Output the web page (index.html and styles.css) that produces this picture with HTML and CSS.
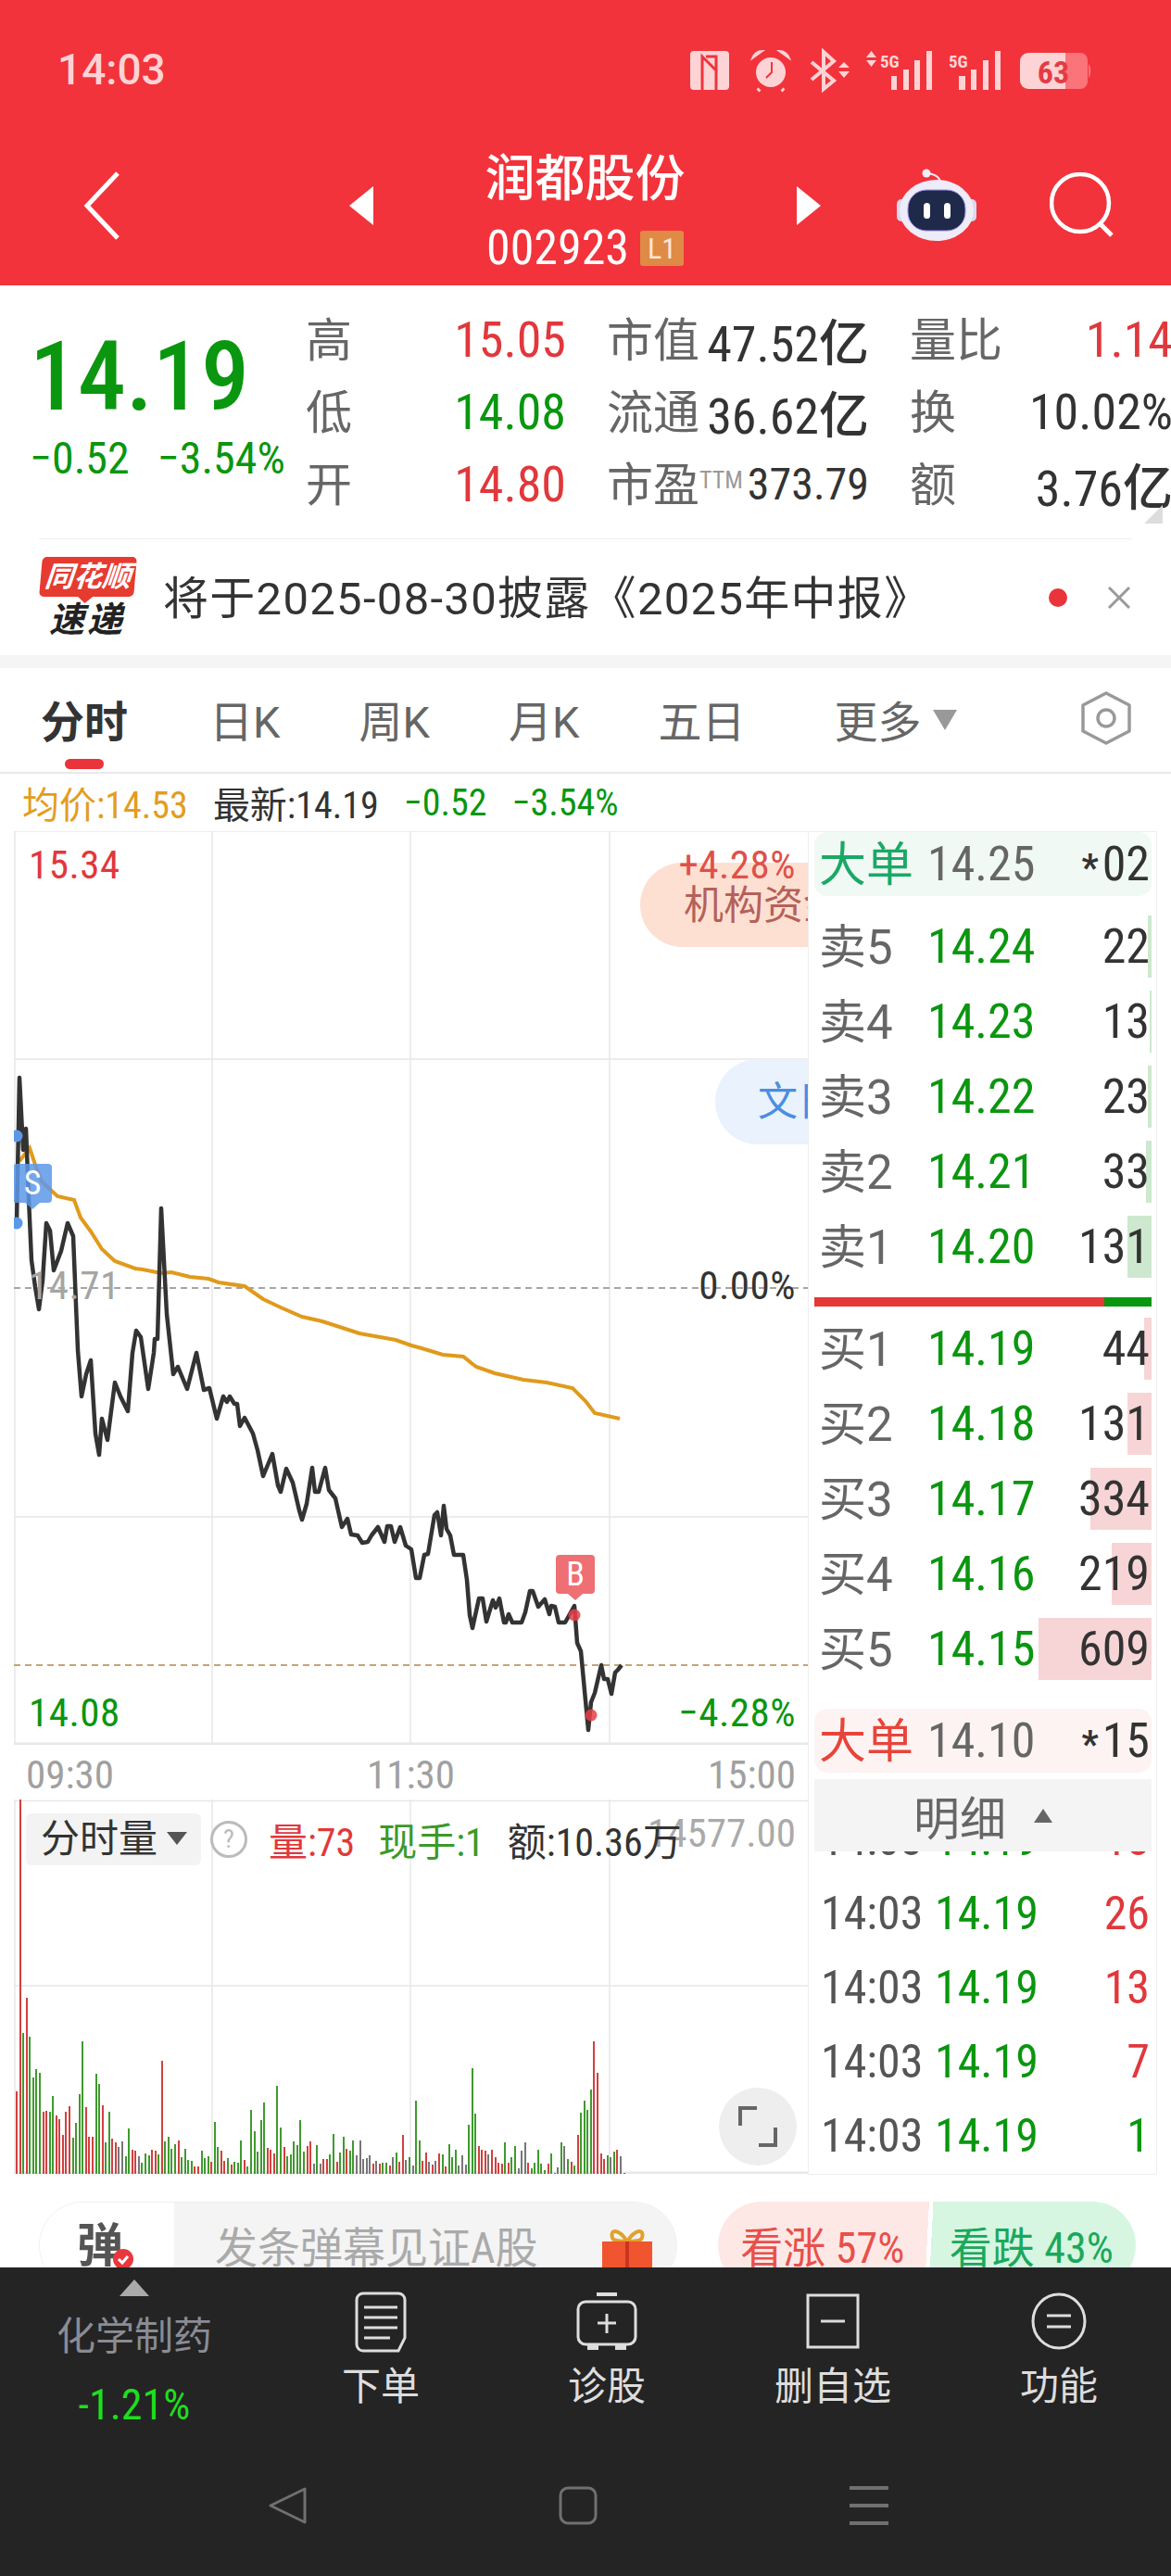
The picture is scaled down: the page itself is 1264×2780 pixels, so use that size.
FILE: index.html
```html
<!DOCTYPE html>
<html lang="zh-CN">
<head>
	<meta charset="utf-8">
	<title>润都股份 002923</title>
	<link rel="stylesheet" href="styles.css">
</head>
<body>
<div class="page">

	<!-- cabecera roja -->
	<header class="top">
		<div class="status">
			<span class="clock">14:03</span>
			<svg class="status-icons" width="460" height="70" viewBox="0 0 460 70">
				<rect x="15" y="15" width="42" height="42" rx="4" fill="#fdd3d5"/>
				<path d="M28 57V21L44 37M32 21H43V57" fill="none" stroke="#f2333b" stroke-width="3"/>
				<circle cx="102" cy="38" r="16" fill="#fdd3d5"/>
				<path d="M82 23C84 18 88 15 93 15ZM122 23C120 18 116 15 111 15Z" fill="#fdd3d5" stroke="#fdd3d5" stroke-width="2"/>
				<path d="M90 56L88 58M114 56L116 58" stroke="#fdd3d5" stroke-width="4"/>
				<path d="M103 27V38L97 44" fill="none" stroke="#f2333b" stroke-width="2"/>
				<path d="M146 27L170 47L159 56V16L170 26L146 46" fill="none" stroke="#fdd3d5" stroke-width="4"/>
				<path d="M175 33H187L181 27ZM175 37H187L181 44ZM205 22H216L210.500 15ZM205 25H216L210.500 32Z" fill="#fdd3d5"/>
				<text class="net" x="220" y="33">5G</text>
				<path d="M232 42h6v15h-6zM245 35h6v22h-6zM257 25h6v32h-6zM270 15h6v42h-6z" fill="#fdd3d5"/>
				<text class="net" x="294" y="33">5G</text>
				<path d="M305 42h7v15h-7zM318 35h6v22h-6zM331 25h6v32h-6zM344 15h6v42h-6z" fill="#fdd3d5"/>
				<path d="M380 17H420V56H380A9 9 0 0 1 371 47V26A9 9 0 0 1 380 17Z" fill="#fdd3d5"/>
				<path d="M420 17H436A8 8 0 0 1 444 25V48A8 8 0 0 1 436 56H420Z" fill="#fb7479"/>
				<path d="M445 29C448 31 448 42 445 44Z" fill="#fb7479"/>
				<text class="battery" x="407" y="50" text-anchor="middle">63</text>
			</svg>
		</div>
		<nav class="nav">
			<svg class="back" width="40" height="76" viewBox="0 0 40 76"><path d="M37 3L4 38L37 73" fill="none" stroke="#fff" stroke-width="5"/></svg>
			<i class="tri-left"></i>
			<div class="title-block">
				<div class="title">润都股份</div>
				<div class="code">002923<span class="badge">L1</span></div>
			</div>
			<i class="tri-right"></i>
			<svg class="robot" width="90" height="82" viewBox="14 10 90 82">
				<path d="M62 27C62 20 56 17 48 16" fill="none" stroke="#f0e8f4" stroke-width="2"/>
				<circle cx="47" cy="16" r="4.500" fill="#f4eef6"/>
				<rect x="15" y="44" width="10" height="24" rx="5" fill="#d9d8ee"/>
				<rect x="91" y="44" width="10" height="24" rx="5" fill="#d9d8ee"/>
				<ellipse cx="58" cy="56" rx="40" ry="33" fill="#eeecf8"/>
				<rect x="27" y="34" width="62" height="44" rx="20" fill="#1f2a4a" stroke="#9b8fe0" stroke-width="1"/>
				<rect x="44" y="48" width="7" height="17" rx="3.500" fill="#fff"/>
				<rect x="66" y="48" width="7" height="17" rx="3.500" fill="#fff"/>
			</svg>
			<svg class="search" width="74" height="72" viewBox="0 0 74 72">
				<circle cx="33" cy="33" r="31" fill="none" stroke="#fff" stroke-width="4.500"/>
				<path d="M55 56L67 68" stroke="#fff" stroke-width="5"/>
			</svg>
		</nav>
	</header>

	<!-- cotizacion -->
	<section class="quote">
		<div class="now">
			<div class="now-price">14.19</div>
			<div class="now-change"><span>−0.52</span><span>−3.54%</span></div>
		</div>
		<div class="stats">
			<div class="stat"><label>高</label><b class="red">15.05</b></div>
			<div class="stat"><label>市值</label><b>47.52亿</b></div>
			<div class="stat"><label>量比</label><b class="red">1.14</b></div>
			<div class="stat"><label>低</label><b class="green">14.08</b></div>
			<div class="stat"><label>流通</label><b>36.62亿</b></div>
			<div class="stat"><label>换</label><b>10.02%</b></div>
			<div class="stat"><label>开</label><b class="red">14.80</b></div>
			<div class="stat"><label>市盈<sup>TTM</sup></label><b class="small">373.79</b></div>
			<div class="stat"><label>额</label><b>3.76亿</b></div>
		</div>
		<i class="corner"></i>
	</section>
	<div class="rule"></div>

	<!-- aviso -->
	<section class="notice">
		<div class="logo">
			<div class="logo-top"><span>同花顺</span></div>
			<div class="logo-bottom">速递</div>
		</div>
		<p class="notice-text">将于2025-08-30披露《2025年中报》</p>
		<i class="dot"></i>
		<svg class="close" width="28" height="28" viewBox="0 0 28 28"><path d="M3 3L25 25M25 3L3 25" stroke="#999" stroke-width="3"/></svg>
	</section>
	<div class="band"></div>

	<!-- pestañas -->
	<div class="tabs">
		<span class="tab active">分时</span>
		<span class="tab first">日K</span>
		<span class="tab">周K</span>
		<span class="tab">月K</span>
		<span class="tab">五日</span>
		<span class="tab more">更多<i class="tri-down"></i></span>
		<svg class="hex" width="56" height="60" viewBox="0 0 56 60">
			<path d="M28 3L53 16V44L28 57L3 44V16Z" fill="none" stroke="#999" stroke-width="3.500" stroke-linejoin="round"/>
			<circle cx="28" cy="30" r="9" fill="none" stroke="#999" stroke-width="3.500"/>
		</svg>
	</div>

	<div class="info">
		<span class="gold">均价:14.53</span>
		<span class="dark">最新:14.19</span>
		<span class="green">−0.52</span>
		<span class="green">−3.54%</span>
	</div>

	<div class="main">
		<div class="charts">
			<div class="price-chart">
				<svg class="plot" width="857" height="986" viewBox="15 897 857 986">
					<path d="M16 897V1883M229 897V1883M443 897V1883M658 897V1883M15 897H872M15 1143H872M15 1637H872" fill="none" stroke="#e8e8e8" stroke-width="1.500"/>
					<path d="M15 1882H872" stroke="#e8e8e8" stroke-width="3"/>
					<path d="M15 1390H872" stroke="#a5a5a5" stroke-width="2" stroke-dasharray="7 5"/>
					<path d="M15 1797H872" stroke="#c4a574" stroke-width="2" stroke-dasharray="7 5"/>
					<polyline class="avg" points="21,1253 25,1248 32,1239 38,1257 45,1275 62,1291 80,1295 87,1314 98,1329 110,1348 124,1361 146,1369 154,1370 174,1374 185,1373 205,1378 225,1380 236,1384 264,1388 284,1402 303,1411 326,1421 348,1426 388,1439 427,1446 444,1452 455,1455 478,1462 500,1464 514,1475 534,1482 565,1489 590,1492 618,1498 632,1512 642,1525 669,1531"/>
					<polyline class="line" points="18,1320 21,1163 25,1241 28,1218 31,1293 34,1360 38,1389 42,1413 46,1382 50,1320 54,1328 58,1371 66,1350 73,1320 79,1334 84,1457 88,1507 93,1483 98,1468 103,1547 107,1570 110,1531 116,1554 124,1492 130,1507 138,1523 143,1460 147,1436 152,1443 160,1499 166,1460 167,1445 170,1445 174,1304 180,1418 187,1483 192,1475 202,1499 212,1460 220,1500 226,1498 234,1531 241,1507 245,1513 248,1507 253,1515 256,1515 259,1539 264,1530 273,1547 278,1565 284,1593 294,1569 300,1603 303,1610 309,1585 316,1600 323,1630 326,1640 331,1623 337,1584 340,1610 344,1610 351,1584 355,1608 362,1617 369,1648 375,1639 379,1656 386,1657 391,1665 397,1664 401,1657 408,1648 415,1664 418,1647 422,1647 426,1664 432,1648 438,1668 444,1672 449,1703 453,1703 458,1678 462,1677 469,1635 472,1632 476,1657 479,1625 482,1650 486,1657 490,1678 500,1678 504,1705 507,1743 510,1757 517,1725 521,1725 525,1750 532,1727 535,1735 539,1725 544,1751 546,1751 549,1742 553,1751 563,1751 567,1740 572,1717 575,1717 581,1734 588,1726 593,1742 595,1733 599,1734 603,1751 610,1751 620,1733 623,1773 627,1782 635,1867 638,1837 642,1827 649,1797 652,1812 656,1812 660,1828 664,1805 667,1802 671,1797"/>
					<circle cx="18" cy="1226" r="6.500" fill="#5b98e8"/>
					<circle cx="18" cy="1320" r="6.500" fill="#5b98e8"/>
					<circle cx="620" cy="1743" r="6.500" fill="#e63e4a" fill-opacity="0.85"/>
					<circle cx="638" cy="1851" r="6.500" fill="#e63e4a" fill-opacity="0.85"/>
				</svg>
				<div class="pill pill-org">机构资金</div>
				<div class="pill pill-news">文日</div>
				<span class="tag tag-s">S</span>
				<span class="tag tag-b">B</span>
				<span class="lbl l-high red">15.34</span>
				<span class="lbl r-high redsoft">+4.28%</span>
				<span class="lbl l-mid grey">14.71</span>
				<span class="lbl r-mid dark">0.00%</span>
				<span class="lbl l-low green">14.08</span>
				<span class="lbl r-low green">−4.28%</span>
			</div>
			<div class="axis"><span>09:30</span><span>11:30</span><span>15:00</span></div>
			<div class="vol-chart">
				<svg class="plot" width="857" height="404" viewBox="0 0 857 404">
					<path d="M1 0V404M214 0V404M428 0V404M643 0V404M0 1.500H857M0 201H857" fill="none" stroke="#e8e8e8" stroke-width="1.500"/>
					<path d="M0 403H857" stroke="#e8e8e8" stroke-width="3"/>
				</svg>
				<div class="vol-bars">
					<i class="r" style="height:89px"></i><i class="r" style="height:404px"></i><i class="g" style="height:152px"></i><i class="r" style="height:190px"></i><i class="g" style="height:148px"></i><i class="g" style="height:104px"></i><i class="g" style="height:113px"></i><i class="g" style="height:109px"></i><i class="r" style="height:67px"></i><i class="r" style="height:68px"></i>
					<i class="g" style="height:67px"></i><i class="g" style="height:84px"></i><i class="r" style="height:63px"></i><i class="r" style="height:59px"></i><i class="r" style="height:42px"></i><i class="r" style="height:67px"></i><i class="r" style="height:73px"></i><i class="g" style="height:39px"></i><i class="g" style="height:55px"></i><i class="g" style="height:86px"></i>
					<i class="g" style="height:143px"></i><i class="r" style="height:72px"></i><i class="r" style="height:40px"></i><i class="r" style="height:40px"></i><i class="g" style="height:108px"></i><i class="g" style="height:97px"></i><i class="r" style="height:74px"></i><i class="g" style="height:34px"></i><i class="g" style="height:67px"></i><i class="r" style="height:38px"></i>
					<i class="r" style="height:34px"></i><i class="n" style="height:29px"></i><i class="n" style="height:35px"></i><i class="g" style="height:19px"></i><i class="g" style="height:49px"></i><i class="r" style="height:26px"></i><i class="r" style="height:25px"></i><i class="n" style="height:19px"></i><i class="g" style="height:12px"></i><i class="g" style="height:22px"></i>
					<i class="g" style="height:20px"></i><i class="r" style="height:26px"></i><i class="r" style="height:25px"></i><i class="g" style="height:21px"></i><i class="r" style="height:122px"></i><i class="g" style="height:35px"></i><i class="g" style="height:40px"></i><i class="g" style="height:27px"></i><i class="g" style="height:32px"></i><i class="r" style="height:36px"></i>
					<i class="g" style="height:18px"></i><i class="g" style="height:27px"></i><i class="g" style="height:15px"></i><i class="g" style="height:14px"></i><i class="r" style="height:8px"></i><i class="r" style="height:8px"></i><i class="g" style="height:25px"></i><i class="g" style="height:17px"></i><i class="g" style="height:19px"></i><i class="r" style="height:13px"></i>
					<i class="g" style="height:56px"></i><i class="g" style="height:29px"></i><i class="r" style="height:25px"></i><i class="r" style="height:14px"></i><i class="g" style="height:17px"></i><i class="r" style="height:10px"></i><i class="g" style="height:13px"></i><i class="g" style="height:12px"></i><i class="g" style="height:36px"></i><i class="r" style="height:15px"></i>
					<i class="g" style="height:8px"></i><i class="g" style="height:69px"></i><i class="g" style="height:46px"></i><i class="g" style="height:24px"></i><i class="g" style="height:58px"></i><i class="g" style="height:77px"></i><i class="r" style="height:28px"></i><i class="r" style="height:26px"></i><i class="r" style="height:22px"></i><i class="g" style="height:95px"></i>
					<i class="g" style="height:50px"></i><i class="r" style="height:29px"></i><i class="g" style="height:19px"></i><i class="g" style="height:21px"></i><i class="g" style="height:35px"></i><i class="g" style="height:31px"></i><i class="g" style="height:58px"></i><i class="g" style="height:24px"></i><i class="r" style="height:30px"></i><i class="r" style="height:35px"></i>
					<i class="n" style="height:11px"></i><i class="g" style="height:31px"></i><i class="n" style="height:11px"></i><i class="r" style="height:16px"></i><i class="r" style="height:16px"></i><i class="g" style="height:21px"></i><i class="g" style="height:43px"></i><i class="r" style="height:13px"></i><i class="g" style="height:23px"></i><i class="g" style="height:40px"></i>
					<i class="r" style="height:27px"></i><i class="g" style="height:25px"></i><i class="g" style="height:36px"></i><i class="n" style="height:20px"></i><i class="n" style="height:36px"></i><i class="n" style="height:16px"></i><i class="n" style="height:17px"></i><i class="n" style="height:20px"></i><i class="r" style="height:11px"></i><i class="n" style="height:14px"></i>
					<i class="r" style="height:11px"></i><i class="g" style="height:12px"></i><i class="g" style="height:12px"></i><i class="r" style="height:9px"></i><i class="n" style="height:18px"></i><i class="g" style="height:23px"></i><i class="r" style="height:13px"></i><i class="r" style="height:42px"></i><i class="n" style="height:15px"></i><i class="g" style="height:18px"></i>
					<i class="n" style="height:9px"></i><i class="g" style="height:79px"></i><i class="g" style="height:36px"></i><i class="r" style="height:14px"></i><i class="r" style="height:23px"></i><i class="n" style="height:13px"></i><i class="r" style="height:10px"></i><i class="n" style="height:14px"></i><i class="r" style="height:22px"></i><i class="g" style="height:21px"></i>
					<i class="r" style="height:8px"></i><i class="g" style="height:32px"></i><i class="g" style="height:18px"></i><i class="g" style="height:26px"></i><i class="n" style="height:9px"></i><i class="n" style="height:20px"></i><i class="n" style="height:10px"></i><i class="g" style="height:53px"></i><i class="g" style="height:114px"></i><i class="g" style="height:65px"></i>
					<i class="r" style="height:30px"></i><i class="r" style="height:26px"></i><i class="r" style="height:25px"></i><i class="n" style="height:21px"></i><i class="r" style="height:26px"></i><i class="r" style="height:18px"></i><i class="r" style="height:12px"></i><i class="r" style="height:11px"></i><i class="g" style="height:34px"></i><i class="r" style="height:12px"></i>
					<i class="g" style="height:18px"></i><i class="g" style="height:30px"></i><i class="n" style="height:6px"></i><i class="n" style="height:25px"></i><i class="n" style="height:34px"></i><i class="r" style="height:12px"></i><i class="g" style="height:6px"></i><i class="g" style="height:12px"></i><i class="g" style="height:26px"></i><i class="g" style="height:11px"></i>
					<i class="g" style="height:4px"></i><i class="r" style="height:11px"></i><i class="g" style="height:22px"></i><i class="g" style="height:1px"></i><i class="n" style="height:7px"></i><i class="g" style="height:34px"></i><i class="n" style="height:30px"></i><i class="g" style="height:16px"></i><i class="r" style="height:13px"></i><i class="g" style="height:9px"></i>
					<i class="r" style="height:42px"></i><i class="g" style="height:66px"></i><i class="g" style="height:79px"></i><i class="g" style="height:69px"></i><i class="g" style="height:91px"></i><i class="r" style="height:143px"></i><i class="r" style="height:109px"></i><i class="r" style="height:22px"></i><i class="r" style="height:16px"></i><i class="g" style="height:20px"></i>
					<i class="n" style="height:18px"></i><i class="g" style="height:24px"></i><i class="r" style="height:26px"></i><i class="n" style="height:19px"></i><i class="r" style="height:1px"></i>
				</div>
				<div class="vol-head">
					<span class="vol-select">分时量<i class="tri-down dark-tri"></i></span>
					<svg class="help" width="42" height="42" viewBox="0 0 42 42">
						<circle cx="21" cy="21" r="18.500" fill="none" stroke="#bbb" stroke-width="3"/>
						<text class="help-mark" x="21" y="30" text-anchor="middle">?</text>
					</svg>
					<span class="red">量:73</span>
					<span class="green-soft">现手:1</span>
					<span class="dark">额:10.36万</span>
				</div>
				<span class="vol-max">14577.00</span>
				<button class="expand">
					<svg width="42" height="44" viewBox="0 0 42 44"><path d="M2 21V2H20M40 23V42H22" fill="none" stroke="#666" stroke-width="4"/></svg>
				</button>
			</div>
		</div>

		<!-- libro de ordenes -->
		<aside class="book">
			<div class="big-order big-sell"><span class="big-name">大单</span><span class="big-price">14.25</span><span class="big-qty"><em>*</em>02</span></div>
			<div class="levels sell">
				<div class="level"><i class="level-bar" style="width:4px"></i><span>卖5</span><b>14.24</b><u>22</u></div>
				<div class="level"><i class="level-bar" style="width:2px"></i><span>卖4</span><b>14.23</b><u>13</u></div>
				<div class="level"><i class="level-bar" style="width:4px"></i><span>卖3</span><b>14.22</b><u>23</u></div>
				<div class="level"><i class="level-bar" style="width:6px"></i><span>卖2</span><b>14.21</b><u>33</u></div>
				<div class="level"><i class="level-bar" style="width:26px"></i><span>卖1</span><b>14.20</b><u>131</u></div>
			</div>
			<div class="ratio"></div>
			<div class="levels buy">
				<div class="level"><i class="level-bar" style="width:8px"></i><span>买1</span><b>14.19</b><u>44</u></div>
				<div class="level"><i class="level-bar" style="width:26px"></i><span>买2</span><b>14.18</b><u>131</u></div>
				<div class="level"><i class="level-bar" style="width:66px"></i><span>买3</span><b>14.17</b><u>334</u></div>
				<div class="level"><i class="level-bar" style="width:43px"></i><span>买4</span><b>14.16</b><u>219</u></div>
				<div class="level"><i class="level-bar" style="width:122px"></i><span>买5</span><b>14.15</b><u>609</u></div>
			</div>
			<div class="big-order big-buy"><span class="big-name">大单</span><span class="big-price">14.10</span><span class="big-qty"><em>*</em>15</span></div>
			<div class="detail-head">明细<i class="tri-up"></i></div>
			<div class="trades">
				<div class="trade partial"><span>14:03</span><b>14.19</b><u class="red">18</u></div>
				<div class="trade"><span>14:03</span><b>14.19</b><u class="red">26</u></div>
				<div class="trade"><span>14:03</span><b>14.19</b><u class="red">13</u></div>
				<div class="trade"><span>14:03</span><b>14.19</b><u class="red">7</u></div>
				<div class="trade"><span>14:03</span><b>14.19</b><u class="green">1</u></div>
			</div>
		</aside>
	</div>

	<!-- barra de comentarios -->
	<div class="danmu">
		<div class="chat">
			<div class="chat-tag">弹<svg class="chat-check" width="24" height="24" viewBox="0 0 24 24"><circle cx="12" cy="12" r="11" fill="#e8383d"/><path d="M7 12L11 16L17 9" fill="none" stroke="#fff" stroke-width="3"/></svg></div>
			<div class="chat-input">发条弹幕见证A股
				<svg class="gift" width="58" height="44" viewBox="0 0 58 44">
					<path d="M29 14C20 0 10 0 13 10C14 14 22 14 29 14C36 14 44 14 45 10C48 0 38 0 29 14Z" fill="none" stroke="#e3a02c" stroke-width="4"/>
					<rect x="2" y="14" width="54" height="30" fill="#f0552f"/>
					<path d="M29 14V44" stroke="#c9351f" stroke-width="4"/>
				</svg>
			</div>
		</div>
		<div class="vote">
			<span class="vote-up">看涨 57%</span>
			<span class="vote-down">看跌 43%</span>
		</div>
	</div>

	<!-- barra inferior -->
	<footer class="dock">
		<div class="dock-row">
			<div class="sector">
				<i class="sector-tri"></i>
				<span class="sector-name">化学制药</span>
				<span class="sector-pct">-1.21%</span>
			</div>
			<div class="dock-item">
				<svg width="56" height="66" viewBox="0 0 56 66">
					<path d="M9 2H47A7 7 0 0 1 54 9V50L47 64H9A7 7 0 0 1 2 57V9A7 7 0 0 1 9 2Z" fill="none" stroke="#ddd" stroke-width="3"/>
					<path d="M10 17H46M10 28H46M10 39H46M10 50H38" stroke="#ddd" stroke-width="3"/>
				</svg>
				<span>下单</span>
			</div>
			<div class="dock-item">
				<svg width="66" height="66" viewBox="0 0 66 66">
					<path d="M22 3H44" stroke="#ddd" stroke-width="4"/>
					<rect x="2" y="11" width="62" height="46" rx="8" fill="none" stroke="#ddd" stroke-width="3"/>
					<path d="M33 24V45M23 34H43" stroke="#ddd" stroke-width="3"/>
					<path d="M12 57H24V63H12ZM42 57H54V63H42Z" fill="#ddd"/>
				</svg>
				<span>诊股</span>
			</div>
			<div class="dock-item">
				<svg width="58" height="66" viewBox="0 0 58 66">
					<rect x="2" y="4" width="54" height="56" fill="none" stroke="#ddd" stroke-width="3"/>
					<path d="M16 32H42" stroke="#ddd" stroke-width="3"/>
				</svg>
				<span>删自选</span>
			</div>
			<div class="dock-item">
				<svg width="60" height="66" viewBox="0 0 60 66">
					<ellipse cx="30" cy="32" rx="28" ry="29" fill="none" stroke="#ddd" stroke-width="3"/>
					<path d="M17 26H43M17 38H43" stroke="#ddd" stroke-width="3"/>
				</svg>
				<span>功能</span>
			</div>
		</div>
		<div class="sys">
			<svg width="42" height="42" viewBox="0 0 42 42"><path d="M40 3V39L3 21Z" fill="none" stroke="#707070" stroke-width="3" stroke-linejoin="round"/></svg>
			<svg width="42" height="42" viewBox="0 0 42 42"><rect x="2" y="2" width="38" height="38" rx="8" fill="none" stroke="#707070" stroke-width="3"/></svg>
			<svg width="42" height="42" viewBox="0 0 42 42"><path d="M0 2H42M0 21H42M0 40H42" stroke="#707070" stroke-width="4"/></svg>
		</div>
	</footer>
</div>
</body>
</html>
```

FILE: styles.css
```css
* {
	margin: 0;
	padding: 0;
	box-sizing: border-box;
}

body {
	width: 1264px;
	height: 2780px;
	background: #fff;
	font-family: Roboto, "Noto Sans CJK SC", sans-serif;
	font-stretch: 81%;
	color: #333;
}

i, em, u {
	font-style: normal;
	text-decoration: none;
}

.page {
	width: 1264px;
	height: 2780px;
	overflow: hidden;
	display: flex;
	flex-direction: column;
}

.red { color: #e0383c; }
.redsoft { color: #e0504a; }
.green { color: #0a960f; }
.green-soft { color: #3a9a2a; }
.gold { color: #e39d1e; }
.dark { color: #333; }
.grey { color: #a5a5a5; }

/* cabecera */
.top {
	height: 308px;
	background: #f2333b;
	color: #fff;
}

.status {
	height: 150px;
	padding: 0 74px 0 62px;
	display: flex;
	align-items: center;
	justify-content: space-between;
}

.clock {
	font-size: 46px;
	font-weight: 500;
	font-stretch: 100%;
	color: #fdd3d5;
}

.net {
	font-size: 19px;
	font-weight: 700;
	fill: #fdd3d5;
}

.battery {
	font-size: 34px;
	font-weight: 700;
	fill: #e53b44;
}

.nav {
	height: 158px;
	padding: 0 0 14px 90px;
	display: flex;
	align-items: center;
}

.tri-left, .tri-right {
	border-top: 21px solid transparent;
	border-bottom: 21px solid transparent;
}

.tri-left {
	margin-left: 247px;
	border-right: 26px solid #fff;
}

.tri-right {
	border-left: 26px solid #fff;
}

.title-block {
	width: 457px;
	margin-top: 9px;
	text-align: center;
}

.title {
	font-size: 54px;
	font-weight: 500;
	line-height: 62px;
}

.code {
	margin-top: 20px;
	height: 46px;
	font-size: 52px;
	line-height: 46px;
	display: flex;
	align-items: center;
	justify-content: center;
}

.badge {
	width: 47px;
	height: 38px;
	margin-left: 12px;
	background: #e08b45;
	border-radius: 3px;
	color: #fde7d5;
	font-size: 32px;
	line-height: 38px;
}

.robot { margin-left: 81px; }
.search { margin-left: 76px; }

/* cotizacion */
.quote {
	position: relative;
	height: 273px;
	display: flex;
}

.now {
	flex: none;
	width: 330px;
	padding: 52px 0 0 32px;
}

.now-price {
	font-size: 104px;
	font-weight: 500;
	font-stretch: 75%;
	line-height: 94px;
	color: #0a960f;
}

.now-change {
	margin-top: 16px;
	display: flex;
	gap: 30px;
	font-size: 48px;
	line-height: 50px;
	color: #0a960f;
}

.stats {
	flex: none;
	padding-top: 19px;
	display: grid;
	grid-template-columns: 281px 283px 284px;
	grid-auto-rows: 78px;
	column-gap: 44px;
}

.stat {
	display: flex;
	align-items: center;
	justify-content: space-between;
	white-space: nowrap;
}

.stat label {
	font-size: 50px;
	color: #666;
	margin-top: -6px;
}

.stat sup {
	font-size: 26px;
	color: #999;
	vertical-align: 14px;
	line-height: 0;
}

.stat b {
	font-size: 54px;
	font-weight: 450;
}

.stat b.small { font-size: 48px; }

.corner {
	position: absolute;
	right: 9px;
	bottom: 16px;
	border-left: 20px solid transparent;
	border-bottom: 20px solid #ddd;
}

.rule {
	height: 1px;
	margin: 0 42px;
	background: #eee;
}

/* aviso */
.notice {
	height: 125px;
	padding: 0 42px 0 44px;
	display: flex;
	align-items: center;
}

.logo { width: 102px; }

.logo-top {
	position: relative;
	height: 43px;
	background: #e63b30;
	border-radius: 5px;
	transform: skewX(-5deg);
	color: #fff;
	font-size: 31px;
	font-weight: 700;
	font-style: italic;
	line-height: 43px;
	text-align: center;
}

.logo-top::after {
	content: "";
	position: absolute;
	left: 42px;
	top: 43px;
	border-left: 8px solid transparent;
	border-right: 8px solid transparent;
	border-top: 7px solid #e63b30;
}

.logo-bottom {
	margin-top: 5px;
	padding-left: 9px;
	font-size: 38px;
	font-weight: 700;
	font-style: italic;
	line-height: 40px;
	color: #222;
	letter-spacing: 3px;
}

.notice-text {
	margin: -6px 0 0 30px;
	font-size: 49px;
	font-stretch: 100%;
	letter-spacing: 1.300px;
	color: #333;
}

.dot {
	margin-left: auto;
	width: 20px;
	height: 20px;
	border-radius: 50%;
	background: #e8343a;
}

.close { margin-left: 42px; }

.band {
	height: 14px;
	background: #f5f5f5;
}

/* pestañas */
.tabs {
	height: 114px;
	padding: 0 42px 4px 44px;
	border-bottom: 2px solid #e8e8e8;
	display: flex;
	align-items: center;
	gap: 85px;
}

.tab {
	position: relative;
	font-size: 47px;
	font-stretch: 100%;
	color: #666;
	white-space: nowrap;
}

.tab.active {
	font-weight: 700;
	color: #333;
}

.tab.active::after {
	content: "";
	position: absolute;
	left: 26px;
	bottom: -20px;
	width: 42px;
	height: 11px;
	border-radius: 6px;
	background: #e8343a;
}

.tab.first { margin-left: 3px; }
.tab.more { margin-left: 11px; }

.tri-down {
	display: inline-block;
	margin-left: 12px;
	vertical-align: 8px;
	border-left: 13px solid transparent;
	border-right: 13px solid transparent;
	border-top: 22px solid #999;
}

.hex { margin-left: auto; }

.info {
	height: 62px;
	padding: 0 0 0 24px;
	display: flex;
	align-items: center;
	gap: 27px;
	font-size: 40px;
}

/* graficos */
.main {
	height: 1479px;
	display: flex;
}

.charts {
	width: 857px;
	margin-left: 15px;
}

.price-chart {
	position: relative;
	height: 986px;
	overflow: hidden;
}

.plot {
	display: block;
	position: absolute;
	left: 0;
	top: 0;
}

.avg {
	fill: none;
	stroke: #e09a1c;
	stroke-width: 4;
}

.line {
	fill: none;
	stroke: #333;
	stroke-width: 4.500;
	stroke-linejoin: round;
}

.pill {
	position: absolute;
	border-radius: 46px 0 0 46px;
	font-size: 43px;
	line-height: 92px;
	white-space: nowrap;
}

.pill-org {
	left: 676px;
	top: 34px;
	width: 240px;
	height: 91px;
	padding-left: 47px;
	background: #fde0d2;
	color: #b5605a;
}

.pill-news {
	left: 757px;
	top: 246px;
	width: 160px;
	height: 92px;
	padding-left: 46px;
	background: #e9f2fd;
	color: #4a8ee0;
}

.tag {
	position: absolute;
	width: 42px;
	color: #fff;
	font-size: 36px;
	line-height: 42px;
	text-align: center;
	border-radius: 4px;
}

.tag::after {
	content: "";
	position: absolute;
	left: 13px;
	top: 100%;
	border-left: 8px solid transparent;
	border-right: 8px solid transparent;
}

.tag-s {
	left: -1px;
	top: 359px;
	background: rgba(92, 152, 232, 0.85);
}

.tag-s::after { border-top: 7px solid rgba(92, 152, 232, 0.85); }

.tag-b {
	left: 585px;
	top: 781px;
	background: #ee6f74;
}

.tag-b::after { border-top: 7px solid #ee6f74; }

.lbl {
	position: absolute;
	font-size: 43px;
	line-height: 44px;
	letter-spacing: 0.500px;
}

.l-high, .l-mid, .l-low { left: 16px; }
.r-high, .r-mid, .r-low { right: 13px; }
.l-high, .r-high { top: 14px; }
.l-mid, .r-mid { top: 468px; }
.l-low, .r-low { top: 929px; }

.axis {
	height: 59px;
	padding: 4px 13px 0 13px;
	display: flex;
	align-items: center;
	justify-content: space-between;
	font-size: 43px;
	color: #a0a0a0;
}

.vol-chart {
	position: relative;
	height: 404px;
}

.vol-bars {
	position: absolute;
	left: 2px;
	bottom: 0;
	display: flex;
	align-items: flex-end;
	gap: 1.570px;
}

.vol-bars i {
	flex: none;
	width: 2px;
}

.vol-bars .r { background: #d2403f; }
.vol-bars .g { background: #3f9a2e; }
.vol-bars .n { background: #777; }

.vol-head {
	position: absolute;
	left: 13px;
	top: 12px;
	display: flex;
	align-items: center;
	font-size: 42px;
	white-space: nowrap;
	z-index: 1;
}

.vol-select {
	width: 189px;
	height: 56px;
	padding-left: 16px;
	background: #f3f3f3;
	border-radius: 6px;
	font-size: 42px;
	line-height: 56px;
	color: #333;
}

.dark-tri {
	margin-left: 10px;
	vertical-align: 8px;
	border-left-width: 11px;
	border-right-width: 11px;
	border-top: 14px solid #555;
}

.help { margin: 0 22px 0 9px; }

.help-mark {
	font-size: 28px;
	fill: #bbb;
}

.vol-head .green-soft { margin: 0 25px; }

.vol-max {
	position: absolute;
	right: 13px;
	top: 14px;
	font-size: 43px;
	line-height: 44px;
	color: #aaa;
}

.expand {
	position: absolute;
	left: 761px;
	top: 311px;
	width: 84px;
	height: 84px;
	border: 0;
	border-radius: 50%;
	background: #eee;
	display: flex;
	align-items: center;
	justify-content: center;
}

/* libro */
.book {
	width: 377px;
	height: 1450px;
	padding: 0 5px 0 6px;
	border: 1px solid #eee;
	overflow: hidden;
}

.big-order {
	height: 69px;
	padding: 0 2px 0 5px;
	border-radius: 14px;
	display: grid;
	grid-template-columns: 117px 1fr auto;
	align-items: center;
	font-size: 52px;
}

.big-sell { background: #f1f9f4; }
.big-buy {
	margin-top: 31px;
	background: #fdf3f3;
}

.big-name {
	font-size: 51px;
	margin-top: -8px;
}

.big-sell .big-name { color: #1aa866; }
.big-buy .big-name { color: #e8443a; }
.big-price { color: #666; }
.big-qty em {
	font-size: 40px;
	font-weight: 700;
	margin-right: 4px;
}

.levels {
	display: flex;
	flex-direction: column;
	gap: 14px;
}

.sell { padding: 21px 0; }
.buy { padding-top: 12px; }

.level {
	position: relative;
	height: 67px;
	padding: 0 2px 0 5px;
	display: grid;
	grid-template-columns: 117px 1fr auto;
	align-items: center;
	font-size: 52px;
}

.level span {
	color: #666;
	font-size: 51px;
	font-stretch: 100%;
	margin-top: -8px;
}

.level b, .trade b {
	color: #0a960f;
	font-weight: 450;
	font-stretch: 79%;
	position: relative;
}

.level u {
	position: relative;
	color: #333;
}

.level-bar {
	position: absolute;
	right: 0;
	top: 0;
	bottom: 0;
}

.sell .level-bar { background: #cde8ce; }
.buy .level-bar { background: #f7d5d6; }

.ratio {
	height: 10px;
	background: linear-gradient(to right, #e53935 86%, #0a960f 86%);
}

.detail-head {
	margin-top: 7px;
	height: 78px;
	background: #f4f4f4;
	display: flex;
	align-items: center;
	justify-content: center;
	font-size: 50px;
	color: #666;
}

.tri-up {
	margin-left: 30px;
	border-left: 10px solid transparent;
	border-right: 10px solid transparent;
	border-bottom: 15px solid #666;
}

.trades {
	height: 351px;
	overflow: hidden;
}

.trade {
	height: 80px;
	padding: 0 2px 0 7px;
	display: grid;
	grid-template-columns: 123px 1fr auto;
	align-items: center;
	font-size: 50px;
	font-stretch: 79%;
}

.trade.partial { margin-top: -53px; }
.trade span { color: #555; }

/* comentarios */
.danmu {
	height: 71px;
	padding-left: 42px;
	display: flex;
	overflow: hidden;
}

.chat {
	width: 689px;
	height: 94px;
	display: flex;
	border-radius: 47px;
	border: 1px solid #eee;
	overflow: hidden;
}

.chat-tag {
	position: relative;
	width: 145px;
	background: #fff;
	padding: 6px 0 0 40px;
	font-size: 50px;
	font-weight: 700;
	color: #555;
}

.chat-check {
	position: absolute;
	left: 78px;
	top: 49px;
}

.chat-input {
	flex: 1;
	background: #f4f4f4;
	padding: 19px 0 0 0;
	position: relative;
	text-indent: 44px;
	font-size: 46px;
	line-height: 60px;
	color: #aaa;
	white-space: nowrap;
}

.gift {
	position: absolute;
	left: 460px;
	top: 28px;
}

.vote {
	width: 451px;
	height: 94px;
	margin-left: 44px;
	border-radius: 47px;
	overflow: hidden;
	background: linear-gradient(93deg, #fde8e6 50%, #fff 50%, #fff 51%, #d6f6e2 51%);
	display: flex;
	padding-top: 15px;
	font-size: 46px;
	line-height: 70px;
}

.vote span {
	width: 50%;
	text-align: center;
}

.vote-up { color: #e8504a; }
.vote-down { color: #1aa85c; }

/* barra inferior */
.dock {
	flex: 1;
	background: #242424;
}

.dock-row {
	height: 210px;
	padding-left: 1px;
	display: grid;
	grid-template-columns: 288px repeat(4, 244px);
}

.sector {
	display: flex;
	flex-direction: column;
	align-items: center;
	padding-top: 13px;
}

.sector-tri {
	border-left: 16px solid transparent;
	border-right: 16px solid transparent;
	border-bottom: 18px solid #aaa;
}

.sector-name {
	margin-top: 20px;
	font-size: 42px;
	line-height: 48px;
	color: #8a8c95;
}

.sector-pct {
	margin-top: 25px;
	font-size: 46px;
	line-height: 48px;
	color: #1ddf1d;
}

.dock-item {
	display: flex;
	flex-direction: column;
	align-items: center;
	padding-top: 26px;
	color: #ddd;
	font-size: 42px;
}

.dock-item span {
	margin-top: 12px;
	line-height: 50px;
}

.sys {
	padding: 26px 17px 0 0;
	display: flex;
	justify-content: center;
	gap: 272px;
}
```
